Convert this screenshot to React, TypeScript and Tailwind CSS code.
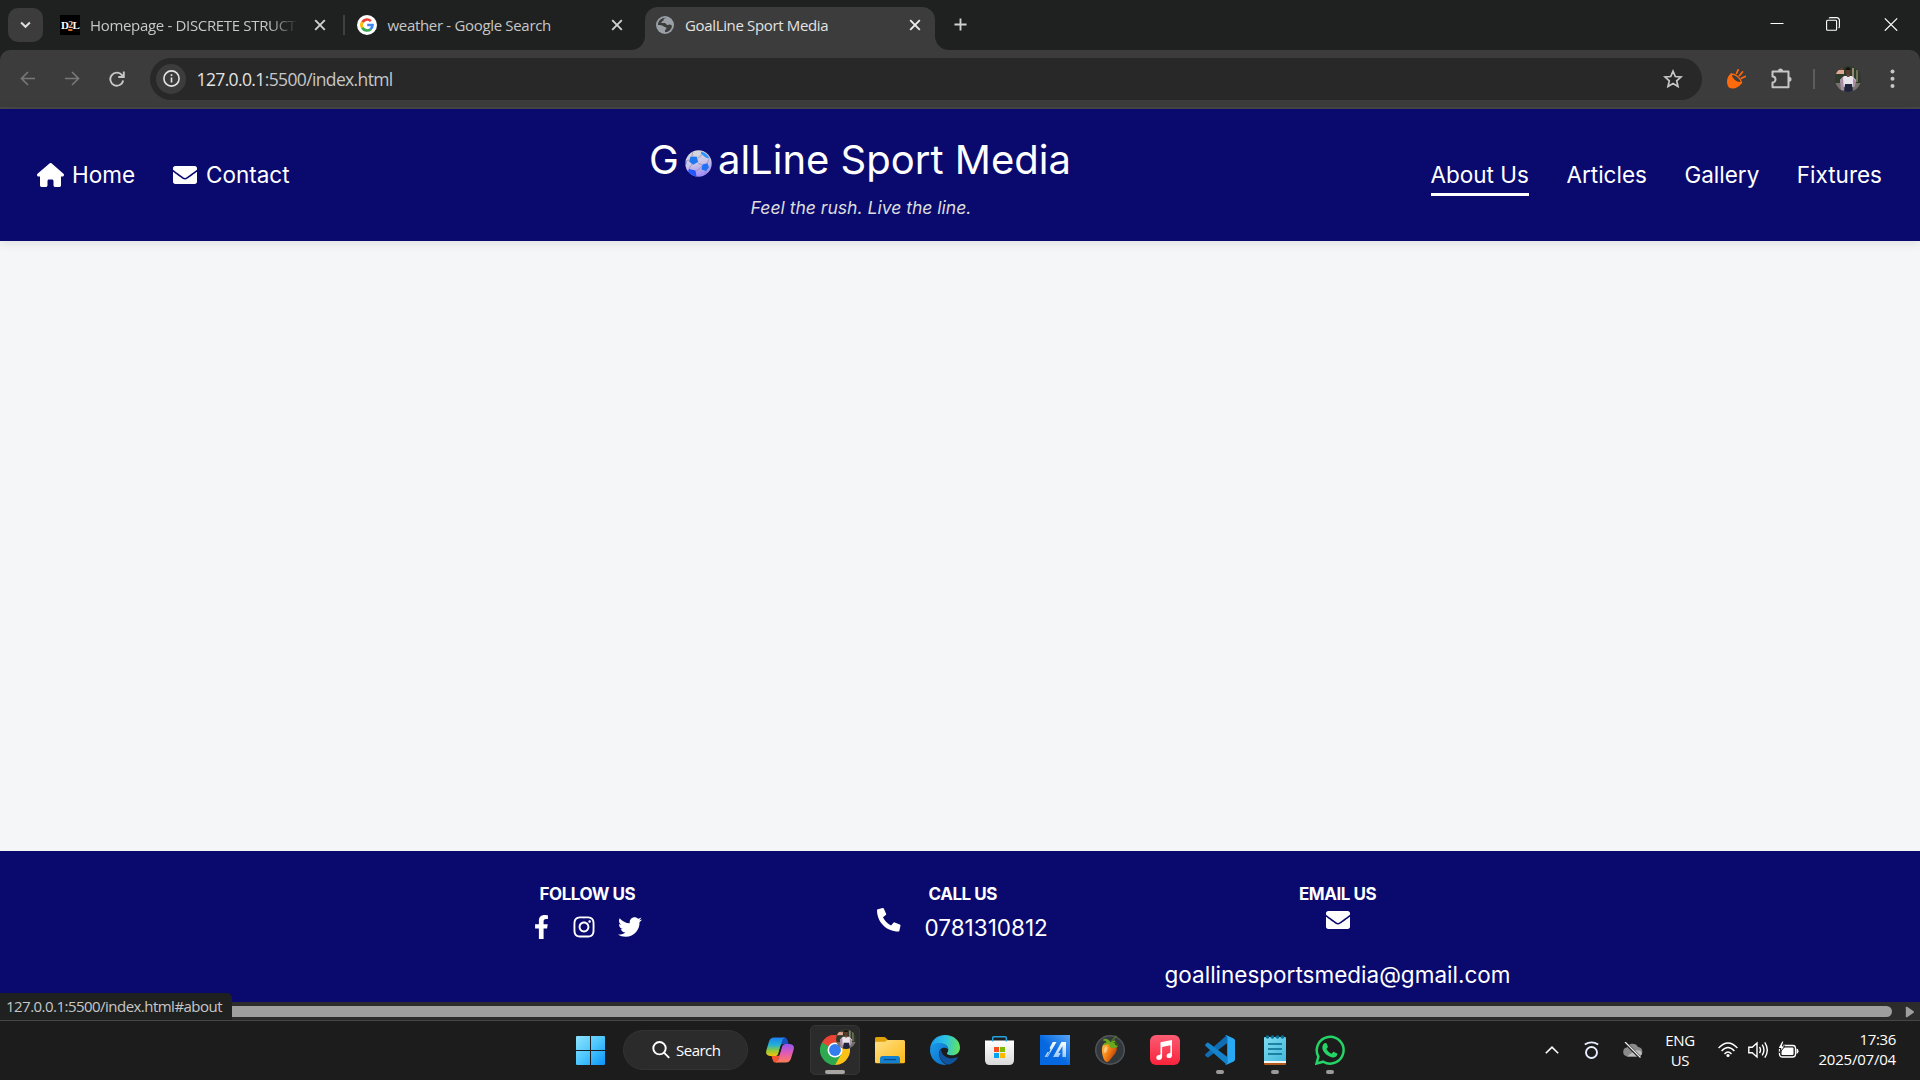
import type { ReactNode } from "react";
import { FaEnvelope, FaFacebookF, FaInstagram, FaTwitter, FaPhoneAlt } from "react-icons/fa";
import { FaHouse } from "react-icons/fa6";

function CloseIcon({ color = "#d0d0d0" }: { color?: string }) {
  return (
    <svg className="size-3 shrink-0" viewBox="0 0 12 12" stroke={color} strokeWidth="1.9" fill="none">
      <path d="M1.2 1.2l9.6 9.6M10.8 1.2l-9.6 9.6" />
    </svg>
  );
}

function GoogleIcon() {
  return (
    <svg className="size-5 shrink-0" viewBox="0 0 20 20" fill="none">
      <circle cx="10" cy="10" r="10" fill="#fff" />
      <g strokeWidth="2.7">
        <path d="M5.3 7.2A5.5 5.5 0 0 1 13.9 6.1" stroke="#ea4335" />
        <path d="M5.4 13A5.5 5.5 0 0 1 5.4 7" stroke="#fbbc05" />
        <path d="M13.6 14.2A5.5 5.5 0 0 1 5.3 12.8" stroke="#34a853" />
        <path d="M10.2 10h5.3a5.5 5.5 0 0 1-2 4.2" stroke="#4285f4" />
      </g>
    </svg>
  );
}

function GlobeIcon() {
  return (
    <svg className="size-[18px] shrink-0" viewBox="0 0 18 18">
      <circle cx="9" cy="9" r="9" fill="#9aa0a6" />
      <path
        d="M10.500 2C8.200 2 7.300 3 7.500 4.300c.1.900-.9.900-1.600 1.100-.8.300-.7 1.600.4 1.700h2.400c1.500 0 1.300 1.700 2.600 1.900 1.200.2 1.400-.6 2.500-.6s1.500 1 2.300 1.100A7.200 7.200 0 0 1 9 16.200v-2.300c1.400-.1 1.700-1.300 1.200-2.100-.6-.9-1.900-.6-2.700-1.500C6.300 9 4.300 8.900 1.900 8.900 2 4.800 5.600 1.700 9.500 1.800z"
        fill="#3c3c3c"
      />
    </svg>
  );
}

function Avatar({ className }: { className: string }) {
  return (
    <svg className={className} viewBox="0 0 26 26">
      <defs>
        <clipPath id="avatar-clip">
          <circle cx="13" cy="13" r="13" />
        </clipPath>
      </defs>
      <g clipPath="url(#avatar-clip)">
        <rect width="26" height="26" fill="#303a2c" />
        <rect width="8" height="7" fill="#574438" />
        <rect x="1" y="4" width="8" height="4" fill="#dca892" />
        <rect x="17" y="2" width="2" height="12" fill="#8f8a70" />
        <rect x="21" y="4" width="2" height="12" fill="#6f7257" />
        <rect y="17" width="26" height="9" fill="#77726e" />
        <path d="M5 14l4-4h8l4 4-2 7H7z" fill="#e9e4ec" />
        <path d="M5 14l3-3 1 13H6zM18 12l3 3-1 5-2 1z" fill="#aa8da5" />
        <path d="M12 7h2.500v4H12z" fill="#6e4635" />
        <ellipse cx="13" cy="5" rx="2.500" ry="3.200" fill="#5c3a2b" />
        <path d="M10.500 4a2.500 2.800 0 0 1 5 0z" fill="#15110f" />
        <path d="M10 18h7l1 8H9z" fill="#20233c" />
      </g>
    </svg>
  );
}

function Tabs() {
  return (
    <div className="flex h-[50px] shrink-0 bg-[#1f2120] font-['Open_Sans','Noto_Sans',sans-serif] text-[15px] leading-[20px] text-[#c7c7c7]">
      <div className="ml-2 mt-2 flex h-[34px] w-[35px] items-center justify-center rounded-[10px] bg-[#3c3c3c]">
        <svg className="h-[8px] w-[11px]" viewBox="0 0 12 8" fill="none" stroke="#dedede" strokeWidth="2.200">
          <path d="M1.200 1.200L6 6l4.800-4.800" />
        </svg>
      </div>
      <div className="ml-[17px] flex h-[50px] w-[284px] items-center">
        <div className="flex h-5 w-5 items-center justify-center bg-black font-['Liberation_Serif',serif] text-[11px] font-bold tracking-[-0.8px] text-white">
          D<span className="text-[10px] text-[#d9c3b5] underline decoration-[#e06a1f] decoration-2 underline-offset-1">2</span>L
        </div>
        <div className="ml-[10px] w-[208px] whitespace-nowrap tracking-[-0.33px] [mask-image:linear-gradient(to_right,#000_86%,transparent)]">
          Homepage - DISCRETE STRUCT
        </div>
        <div className="ml-4 flex">
          <CloseIcon />
        </div>
      </div>
      <div className="-ml-px mt-[15px] h-5 w-[2px] bg-[#3f4140]" />
      <div className="ml-[12px] flex h-[50px] w-[288px] items-center">
        <GoogleIcon />
        <div className="ml-[10.500px] w-[223.500px] whitespace-nowrap tracking-[-0.32px]">weather - Google Search</div>
        <CloseIcon />
      </div>
      <div className="relative mt-[7px] flex h-[43px] w-[290px] items-center rounded-t-[13px] bg-[#3c3c3c] pb-[7px] pl-[11px] text-[#e3e3e3]">
        <svg className="absolute -left-[14px] bottom-0 size-[14px]" viewBox="0 0 14 14">
          <path d="M14 0v14H0A14 14 0 0 0 14 0z" fill="#3c3c3c" />
        </svg>
        <svg className="absolute -right-[14px] bottom-0 size-[14px]" viewBox="0 0 14 14">
          <path d="M0 0v14h14A14 14 0 0 1 0 0z" fill="#3c3c3c" />
        </svg>
        <GlobeIcon />
        <div className="ml-[11px] w-[224px] whitespace-nowrap tracking-[-0.35px]">GoalLine Sport Media</div>
        <CloseIcon color="#eeeeee" />
      </div>
      <svg className="ml-[19px] mt-[18px] size-[13px]" viewBox="0 0 14 14" stroke="#d0d0d0" strokeWidth="2">
        <path d="M7 .5v13M.5 7h13" />
      </svg>
      <div className="ml-auto flex h-[50px] pr-[22px]">
        <svg className="mr-[42px] mt-[17px] size-[14px]" viewBox="0 0 14 14" stroke="#fff" strokeWidth="1">
          <path d="M.5 6.500h13" />
        </svg>
        <svg className="mr-[44px] mt-[17px] size-[14px]" viewBox="0 0 14 14" fill="none" stroke="#fff" strokeWidth="1.100">
          <rect x=".6" y="3.200" width="10" height="10" rx="1" />
          <path d="M3 1.300q.5-.7 1.500-.7h5.900q3 0 3 3v5.900q0 1-.8 1.500" />
        </svg>
        <svg className="mt-[17px] size-[14px]" viewBox="0 0 14 14" fill="none" stroke="#fff" strokeWidth="1.200">
          <path d="M.8 1.300l12.400 12.400M13.200 1.300L.8 13.700" />
        </svg>
      </div>
    </div>
  );
}

function Toolbar() {
  return (
    <div className="h-[59px] shrink-0 bg-[#1f2120]">
      <div className="flex h-[59px] items-center rounded-t-[10px] border-b-2 border-[#474747] bg-[#3c3c3c]">
        <svg className="ml-5 size-[15px] shrink-0" viewBox="0 0 15 15" fill="none" stroke="#777" strokeWidth="1.700">
          <path d="M15 7.500H1.500M8 1L1.500 7.500 8 14" />
        </svg>
        <svg className="ml-[30px] size-[15px] shrink-0" viewBox="0 0 15 15" fill="none" stroke="#777" strokeWidth="1.700">
          <path d="M0 7.500h13.500M7 1l6.500 6.500L7 14" />
        </svg>
        <svg className="ml-[29px] size-4 shrink-0" viewBox="0 0 16 16" fill="none" stroke="#c7c7c7" strokeWidth="1.900">
          <path d="M14.200 9.500A6.500 6.500 0 1 1 13 4.200L14.500 6M14.800 .5V6H9.300" />
        </svg>
        <div className="ml-[25px] flex h-[42px] w-[1552px] shrink-0 items-center rounded-full bg-[#282828] pl-[6px]">
          <div className="flex size-[30px] items-center justify-center rounded-full bg-[#3c3c3c]">
            <svg className="size-[17px]" viewBox="0 0 17 17" fill="none" stroke="#e3e3e3" strokeWidth="1.600">
              <circle cx="8.500" cy="8.500" r="7.600" />
              <path d="M8.500 7.500v5M8.500 4.200v1.900" />
            </svg>
          </div>
          <div className="ml-[10.500px] whitespace-nowrap font-['Open_Sans','Noto_Sans',sans-serif] text-[17.500px] leading-6 tracking-[-0.63px] text-[#c7c7c7]">
            <span className="text-[#e3e3e3]">127.0.0.1</span>:5500/index.html
          </div>
          <svg className="ml-auto mr-[19px] size-5" viewBox="0 0 20 20" fill="none" stroke="#c7c7c7" strokeWidth="1.700">
            <path d="M10 2.200l2.300 5.300 5.700.5-4.300 3.800 1.300 5.700L10 14.500l-5 3 1.300-5.700L2 8l5.700-.5z" />
          </svg>
        </div>
        <svg className="ml-[24px] size-5 shrink-0" viewBox="0 0 20 20">
          <path d="M4.800 4.800C0 8 .2 16 3 18.500c3.500 2.500 10 .5 13-4.700C12 14 6.500 11 4.800 4.800z" fill="#ff6a0c" />
          <path d="M5.200 5C4.800 9.500 10 14.500 15.500 13.600 14.500 9 9.500 5 5.200 5z" fill="#3c3c3c" stroke="#ff6a0c" strokeWidth="1.400" />
          <path d="M10.500 4.500l1.600-3.600M13.500 6.500l3-3.500M15.500 9.300l3.700-1.800" stroke="#ff6a0c" strokeWidth="1.700" strokeLinecap="round" />
        </svg>
        <svg className="ml-[24px] size-[23px] shrink-0" viewBox="0 0 23 23">
          <path
            d="M2.500 4.500h16v15.800h-16v-4.800a3 3 0 0 0 0-6z"
            fill="none"
            stroke="#c7c7c7"
            strokeWidth="2"
            strokeLinejoin="round"
          />
          <path d="M8 4a2.500 2.500 0 0 1 5 0zM19 9.800a2.500 2.500 0 0 1 0 5z" fill="#c7c7c7" />
        </svg>
        <div className="ml-5 h-5 w-[2px] bg-[#5c5c5c]" />
        <Avatar className="ml-5 size-[26px] shrink-0" />
        <svg className="ml-[29px] h-[20px] w-[5px] shrink-0" viewBox="0 0 5 20" fill="#c7c7c7">
          <circle cx="2.500" cy="2.500" r="2" />
          <circle cx="2.500" cy="9.700" r="2" />
          <circle cx="2.500" cy="17" r="2" />
        </svg>
      </div>
    </div>
  );
}

function Football() {
  return (
    <svg className="size-[27px]" viewBox="0 0 27 27">
      <defs>
        <linearGradient id="ball" x1=".3" y1="0" x2=".6" y2="1">
          <stop offset="0" stopColor="#d9dbd9" />
          <stop offset=".5" stopColor="#ccc4e8" />
          <stop offset="1" stopColor="#9b86f8" />
        </linearGradient>
        <clipPath id="ball-clip">
          <circle cx="13.500" cy="13.500" r="13.200" />
        </clipPath>
      </defs>
      <g clipPath="url(#ball-clip)">
        <rect width="27" height="27" fill="url(#ball)" />
        <g stroke="#8b8ba8" strokeWidth=".7" fill="none">
          <path d="M7 6l1-5M13 8l5-4M13 13l4 2M7 14l-3 5M1 11l3-1M17 16l-4 4M22 14l2-5M10 22l3-2M22 19l-2 5" />
        </g>
        <path d="M5.500 6.500l6.300.3 1.300 5.300-5 2.700-4-3.300z" fill="#1f78f0" />
        <path d="M17.500 14.500l4.800-1.300 1.700 4-3 3.800-4.500-1.500z" fill="#1f70f4" />
        <path d="M16 1.500q6 1.500 8.500 7l-3.500-.7-5-4z" fill="#2f93ff" />
        <path d="M4 19l6.500 1.500 1 6H8Q4 24 3 21z" fill="#2455ff" />
        <path d="M0 9l1.500 3L1 15H0z" fill="#2b55e0" />
      </g>
    </svg>
  );
}

function SiteHeader() {
  return (
    <header className="relative flex h-[132px] shrink-0 justify-between bg-[#0a0a6e] pl-[37px] pr-[38px] text-[22.500px] leading-[30px] text-white shadow-[0_2px_10px_rgba(0,0,0,0.1)]">
      <nav className="flex pt-[51px]">
        <a className="flex h-[30px] w-[136px] items-center">
          <FaHouse className="h-6 w-[27px]" />
          <span className="ml-[8px]">Home</span>
        </a>
        <a className="flex h-[30px] items-center">
          <FaEnvelope className="size-6" />
          <span className="ml-[9px]">Contact</span>
        </a>
      </nav>
      <div className="absolute left-[560px] top-0 flex w-[600px] flex-col items-center">
        <h1 className="mt-[27px] flex h-[48px] items-center whitespace-nowrap text-[40px] leading-[48px]">
          G
          <span className="mx-[6px] mt-[7px]">
            <Football />
          </span>
          alLine Sport Media
        </h1>
        <p className="ml-[2px] mt-[12px] text-[17.600px] italic leading-[24px] tracking-[-0.02px] text-[#dcdcdc]">
          Feel the rush. Live the line.
        </p>
      </div>
      <nav className="flex gap-[37.500px] pt-[51px]">
        <a className="h-[36px] border-b-[3px] border-white">About Us</a>
        <a>Articles</a>
        <a>Gallery</a>
        <a>Fixtures</a>
      </nav>
    </header>
  );
}

function SiteFooter() {
  return (
    <footer className="flex h-[151px] shrink-0 bg-[#0a0a6e] text-[22.500px] leading-[30px] text-white">
      <section className="ml-[534px] w-[343px] pt-[32px]">
        <h4 className="ml-[5.500px] text-[17px] font-bold leading-[22px] tracking-[-0.46px]">FOLLOW US</h4>
        <div className="mt-[8px] flex h-[28px] items-center">
          <FaFacebookF className="h-6 w-[15px]" />
          <FaInstagram className="ml-[23px] size-[24px]" />
          <FaTwitter className="ml-[22px] size-6" />
        </div>
      </section>
      <section className="flex w-[288px]">
        <FaPhoneAlt className="mt-[57px] size-[23.500px]" />
        <div className="ml-[24px] pt-[32px]">
          <h4 className="ml-[4px] text-[17px] font-bold leading-[22px] tracking-[-0.46px]">CALL US</h4>
          <div className="mt-[8px]">0781310812</div>
        </div>
      </section>
      <section className="flex w-[345px] flex-col items-center pt-[32px]">
        <h4 className="text-[17px] font-bold leading-[22px] tracking-[-0.46px]">EMAIL US</h4>
        <FaEnvelope className="mt-[3px] size-6" />
        <div className="mt-[28px]">goallinesportsmedia@gmail.com</div>
      </section>
    </footer>
  );
}

function ScrollArea() {
  return (
    <div className="relative flex h-[19px] shrink-0 items-start border-b border-[#464646] bg-[#2c2c2c] pt-[4px]">
      <div className="h-[11px] w-[1892px] rounded-r-full bg-[#9f9f9f]" />
      <svg className="ml-[13px] h-[12px] w-[10px]" viewBox="0 0 10 12">
        <path d="M.8 1.500v9q.2 1.200 1.300.7l6.500-4.500q.8-.7 0-1.400L2.100.8Q1 .3.800 1.500z" fill="#9f9f9f" />
      </svg>
      <div className="absolute bottom-0 left-0 h-[27px] w-[232px] rounded-tr-[5px] bg-[#1f2120] pl-[6px] font-['Open_Sans','Noto_Sans',sans-serif] text-[15px] leading-[26px] tracking-[-0.53px] text-[#c7c7c7]">
        127.0.0.1:5500/index.html#about
      </div>
    </div>
  );
}

function TaskSlot({ children, running = false }: { children: ReactNode; running?: boolean }) {
  return (
    <div className="relative flex h-[58px] w-[55px] shrink-0 items-center justify-center">
      {children}
      {running && <div className="absolute bottom-[5px] h-1 w-2 rounded-full bg-[#9a9a9a]" />}
    </div>
  );
}

function CopilotIcon() {
  return (
    <svg className="h-[26px] w-[28px]" viewBox="0 0 28 26">
      <defs>
        <linearGradient id="cp-left" x1="0" y1="0" x2="0" y2="1">
          <stop offset="0" stopColor="#1d7ff0" />
          <stop offset=".4" stopColor="#22b0d8" />
          <stop offset=".7" stopColor="#8ec93c" />
          <stop offset="1" stopColor="#f2c40c" />
        </linearGradient>
        <linearGradient id="cp-right" x1="0" y1="0" x2="0" y2="1">
          <stop offset="0" stopColor="#9256ee" />
          <stop offset=".5" stopColor="#e25bb4" />
          <stop offset="1" stopColor="#ff7d55" />
        </linearGradient>
      </defs>
      <path d="M17 .500h2q2 .4 2.700 3L22.500 7h-5.800q-2.400 0-3 2.500z" fill="#174fc0" />
      <path d="M11 25.500H9q-2-.5-2.500-3L5.500 19h6q2.300 0 3-2.500z" fill="#f2552f" />
      <path d="M8 .5h11q-2.200.8-3 3.700l-3.400 11.700Q11.700 19 9 19H4q-5-.5-3.600-5.800L3 4.500Q4.300.6 8 .5z" fill="url(#cp-left)" />
      <path d="M20 25.500H9.500q2.200-.8 3-3.700L16 10.100Q16.900 7 19.500 7H24q5 .6 3.600 5.800L25 21.500q-1.300 4-5 4z" fill="url(#cp-right)" />
      <path d="M12.200 17l2.200-7.500q.5-2 2-2.500l-2.300 8.200q-.5 1.500-1.900 1.800z" fill="#1c1c1c" />
    </svg>
  );
}

function ChromeIcon() {
  return (
    <svg className="size-[30px]" viewBox="0 0 48 48">
      <path d="M24 24L3.200 12A24 24 0 0 1 44.800 12z" fill="#ea4335" />
      <path d="M24 24L44.800 12A24 24 0 0 1 24 48z" fill="#fbc116" />
      <path d="M24 24L24 48A24 24 0 0 1 3.200 12z" fill="#2da94f" />
      <path d="M24 12h20.800L34.400 30 24 48l10.400-18z" fill="#fbc116" />
      <path d="M3.200 12l10.400 18L24 24V12z" fill="#2da94f" />
      <path d="M3.200 12A24 24 0 0 1 44.800 12H24a12 12 0 0 0-10.400 6z" fill="#ea4335" />
      <path d="M34.400 30L24 48a24 24 0 0 1-10-2l10-10z" fill="#2da94f" />
      <circle cx="24" cy="24" r="12" fill="#fff" />
      <circle cx="24" cy="24" r="9.500" fill="#347df0" />
    </svg>
  );
}

function FolderIcon() {
  return (
    <svg className="h-[27px] w-[30px]" viewBox="0 0 30 27">
      <defs>
        <linearGradient id="folder" x1="0" y1="0" x2="1" y2="1">
          <stop offset="0" stopColor="#ffe08a" />
          <stop offset="1" stopColor="#fdb913" />
        </linearGradient>
      </defs>
      <path d="M0 1.500Q0 0 1.500 0H9q1 0 1.700.7L13 3v5H0z" fill="#e0a008" />
      <path d="M0 6q0-1.200 1.200-1.200h8.600L12.500 3H28.500Q30 3 30 4.500v20.300q0 1.500-1.500 1.500h-27Q0 26.300 0 24.800z" fill="url(#folder)" />
      <path d="M5 26.300V21.500Q5 19 7.500 19h15q2.500 0 2.500 2.500v4.800z" fill="#1380d0" />
      <path d="M9 22.600h12" stroke="#08498c" strokeWidth="1.200" />
    </svg>
  );
}

function EdgeIcon() {
  return (
    <svg className="size-[30px]" viewBox="0 0 30 30">
      <defs>
        <linearGradient id="edge-top" x1="0" y1=".4" x2="1" y2=".5">
          <stop offset="0" stopColor="#1a9cf0" />
          <stop offset=".5" stopColor="#2cc3e4" />
          <stop offset="1" stopColor="#65e45b" />
        </linearGradient>
        <linearGradient id="edge-low" x1="0" y1="0" x2="1" y2="1">
          <stop offset="0" stopColor="#1b9be8" />
          <stop offset="1" stopColor="#0a6cc8" />
        </linearGradient>
      </defs>
      <path d="M0 14.500C.5 5 7.500 0 15 0c8.500 0 15 5.500 15 12.500 0 5-3.500 7.800-8 7.800-4 0-5.500-1.300-5-2.300.8-1 1.300-2 1.300-3.500C18.300 10 13 8 8.500 8.500 4 9 1 11.500 0 14.500z" fill="url(#edge-top)" />
      <path d="M0 15C.3 10.500 4.500 8 9.500 8c4.500 0 8.800 2.600 8.800 6.500-1-1.200-2.300-1.800-4-1.800-4 0-6 3.500-5 8 .8 4.500 4.200 8.300 8.300 9.100C7.500 31 0 24 0 15z" fill="url(#edge-low)" />
      <path d="M11 14c-2.500 3-2.300 8 .7 11.500 2.500 3 6.300 4.700 8.300 3.700 3-.9 6-3.300 7.600-6.200.3-.7-.2-1-.8-.7-1.500.8-3.300 1.100-5 1.100C16 23.400 11 19.500 11 14z" fill="#10549f" />
    </svg>
  );
}

function StoreIcon() {
  return (
    <svg className="h-[30px] w-[30px]" viewBox="0 0 30 30">
      <defs>
        <linearGradient id="store" x1="0" y1="0" x2="0" y2="1">
          <stop offset="0" stopColor="#fff" />
          <stop offset="1" stopColor="#d9d9d9" />
        </linearGradient>
      </defs>
      <path d="M0 5.500h29V25q0 5-5 5H5q-5 0-5-5z" fill="url(#store)" />
      <path d="M7.700 6.500V2.800Q7.700 1.700 8.800 1.700h11.400q1.100 0 1.100 1.100v3.700" fill="none" stroke="#22a4dc" strokeWidth="1.500" />
      <rect x="9" y="12" width="5" height="5" fill="#f25022" />
      <rect x="15" y="12" width="5" height="5" fill="#7fba00" />
      <rect x="9" y="18" width="5" height="5" fill="#00a4ef" />
      <rect x="15" y="18" width="5" height="5" fill="#ffb900" />
    </svg>
  );
}

function ArmouryIcon() {
  return (
    <svg className="size-[30px]" viewBox="0 0 30 30">
      <defs>
        <linearGradient id="arm" x1="0" y1="1" x2="1" y2="0">
          <stop offset=".45" stopColor="#0568e0" />
          <stop offset="1" stopColor="#58a4f6" />
        </linearGradient>
        <linearGradient id="arm-fg" x1="0" y1="0" x2="0" y2="1">
          <stop offset="0" stopColor="#fff" />
          <stop offset="1" stopColor="#9cc8fb" />
        </linearGradient>
      </defs>
      <rect width="30" height="30" fill="url(#arm)" />
      <path d="M4.500 22l3-5h2.300l-3 5zM7.800 22L16.500 7h-3.700L9.500 13l1 1.500L6.500 22zM13 22L21.500 7H26v15h-3.500V11l-4.200 7h2.400L18.500 22z" fill="url(#arm-fg)" />
    </svg>
  );
}

function FruityIcon() {
  return (
    <svg className="size-[30px]" viewBox="0 0 30 30">
      <defs>
        <linearGradient id="fruit" x1="0" y1="0" x2="1" y2=".6">
          <stop offset="0" stopColor="#ffc04a" />
          <stop offset=".5" stopColor="#f98516" />
          <stop offset="1" stopColor="#b63e05" />
        </linearGradient>
      </defs>
      <circle cx="15" cy="15" r="14.300" fill="#33383c" stroke="#50565a" strokeWidth="1.400" />
      <path d="M8 10c3-3.500 11-3 13.500 2 1.500 4-2.500 8-5.500 11.500-2.500 4.500-5.500 4.500-7 1C7 20 6 13.500 8 10z" fill="url(#fruit)" />
      <path d="M9.500 13c1-2 3-2 3 0s-2 6-3 5-1-3 0-5z" fill="#ffd898" opacity=".8" />
      <path d="M15.500 7c-3-4-6.500-4-8-1.500 2.500-.3 3.500.7 4 2-2 0-3 1-3 3 2-1.500 4-1 5.500-1 .3 2.500 2 4.500 4 3 1.500 1.300 4 .5 5-1.800-1.500.2-2-.7-3-1.200C22 6 19 4.500 17.500 6z" fill="#6ba81c" />
      <path d="M16.500 6.500L21.500.8" stroke="#4e7a20" strokeWidth="1.300" />
      <path d="M18 7q4-.5 6 3l-3-.5z" fill="#2e5c10" />
    </svg>
  );
}

function MusicIcon() {
  return (
    <svg className="size-[30px]" viewBox="0 0 30 30">
      <defs>
        <linearGradient id="music" x1="0" y1="0" x2="0" y2="1">
          <stop offset="0" stopColor="#fb5c74" />
          <stop offset="1" stopColor="#fa233b" />
        </linearGradient>
      </defs>
      <rect width="30" height="30" rx="6" fill="url(#music)" />
      <path d="M10.500 7.300L22 5v15.500q-.2 2.500-3 2.600-2.500 0-2.500-2.200 0-2.300 2.500-2.700 1.400-.1 1.400-1V10.300l-8.300 1.700v10q-.2 3-3.300 3.100-2.600-.1-2.600-2.400.1-2.200 2.600-2.600 1.700-.1 1.700-1.200z" fill="#fff" />
    </svg>
  );
}

function CodeIcon() {
  return (
    <svg className="size-[30px]" viewBox="0 0 30 30">
      <path d="M22 0v8.200L3.500 22.200q-.8.600-1.600-.1L.5 20.800q-.9-.9 0-1.800z" fill="#0f6db5" />
      <path d="M22 30v-8.200L3.500 7.800q-.8-.6-1.600.1L.5 9.200q-.9.9 0 1.800z" fill="#1583cc" />
      <path d="M21.500 0.200L28.700 3.500Q30 4.200 30 5.700v18.600q0 1.500-1.300 2.200l-7.200 3.300q-.8.400-1.500-.3 2.200.5 2.200-1.800V2.300q0-2.300-2.200-1.800.7-.7 1.500-.3z" fill="#29a8f4" />
    </svg>
  );
}

function NotepadIcon() {
  return (
    <svg className="h-[30px] w-[22px]" viewBox="0 0 22 30">
      <defs>
        <linearGradient id="note" x1="0" y1="0" x2="1" y2="1">
          <stop offset="0" stopColor="#7fdcf0" />
          <stop offset="1" stopColor="#42b8dc" />
        </linearGradient>
      </defs>
      <rect y="24" width="22" height="6" rx="1" fill="#b05a1c" />
      <rect y="22" width="22" height="6" fill="#f4f4f4" />
      <path d="M0 3q0-1 1-1h20q1 0 1 1v23H0z" fill="url(#note)" />
      <path d="M4 9h14M4 14h14M4 19h14" stroke="#076a8c" strokeWidth="1.600" />
      <g fill="#087094">
        <circle cx="3.500" cy="2" r="1.800" />
        <circle cx="8.500" cy="2" r="1.800" />
        <circle cx="13.500" cy="2" r="1.800" />
        <circle cx="18.500" cy="2" r="1.800" />
      </g>
    </svg>
  );
}

function WhatsAppIcon() {
  return (
    <svg className="size-[30px]" viewBox="0 0 30 30">
      <path d="M1.500 28.500l1.900-6.900A13.400 13.400 0 1 1 8.300 26.700z" fill="none" stroke="#25d366" strokeWidth="2.500" />
      <path d="M10.500 8c.7 0 1 .2 1.200.8l1.100 2.600c.2.600-.1 1-1.400 2.500 1.200 2.200 2.900 3.700 5.300 4.800 1.300-1.600 1.600-2 2.200-1.800l2.900 1.400c.5.300.6.600.4 1.400-.5 2-2.500 2.900-4.500 2.700-5-.7-9.700-5.200-10.300-9C7 10.500 8.800 8 10.500 8z" fill="#25d366" />
    </svg>
  );
}

function Tray() {
  return (
    <div className="ml-auto flex h-[58px] items-center pr-[24px] font-['Open_Sans','Noto_Sans',sans-serif] text-[15px] leading-[20px] tracking-[-0.35px] text-white">
      <svg className="h-2 w-[14px]" viewBox="0 0 14 8" fill="none" stroke="#fff" strokeWidth="1.600">
        <path d="M.8 7.200L7 1.200l6.200 6" />
      </svg>
      <svg className="ml-[25px] h-[18px] w-[15px]" viewBox="0 0 15 18" fill="none" stroke="#e8eefb" strokeWidth="1.900">
        <circle cx="7.500" cy="11.500" r="5.500" />
        <path d="M.8 3.500Q7.500-.8 14.200 3.500" />
      </svg>
      <svg className="ml-[23px] h-[16px] w-[21px]" viewBox="0 0 21 16">
        <path d="M5 14.500a4.600 4.600 0 0 1-.3-9A6.300 6.300 0 0 1 16 5a4.800 4.800 0 0 1 .4 9.500z" fill="#8a8a8a" />
        <path d="M5 14.500L13 8.500q6-1.500 7 3-1 3-3.600 3z" fill="#bdbdbd" />
        <path d="M2.500 0L18 15.500" stroke="#1c1c1c" strokeWidth="3" />
        <path d="M3 0l15.500 15.500" stroke="#eee" strokeWidth="1.300" />
      </svg>
      <div className="ml-[20px] w-[34px] text-center">
        <div>ENG</div>
        <div>US</div>
      </div>
      <svg className="ml-[21px] h-[16px] w-[20px]" viewBox="0 0 20 16" fill="none" stroke="#fff" strokeWidth="1.400">
        <path d="M.6 6Q10-4 19.400 6M3.600 9Q10 2 16.400 9M6.500 12Q10 8 13.500 12" />
        <circle cx="10" cy="13.500" r="1.600" fill="#fff" stroke="none" />
      </svg>
      <svg className="ml-[10px] h-[18px] w-[21px]" viewBox="0 0 21 18" fill="none" stroke="#fff" strokeWidth="1.400">
        <path d="M.8 6.200h3.400L9 2v14l-4.800-4.200H.8zM11.500 6q2 3 0 6M14.200 3.700q3.500 5.300 0 10.600M16.800 1.300q5 7.700 0 15.400" />
      </svg>
      <svg className="ml-[9px] h-[18px] w-[21px]" viewBox="0 0 21 18">
        <rect x="1.500" y="4.500" width="16" height="11.500" rx="2.800" fill="none" stroke="#fff" strokeWidth="1.300" />
        <rect x="3.500" y="6.500" width="12" height="7.500" rx="1" fill="#fff" />
        <path d="M18.500 7.500q2 .3 2 2.700t-2 2.700z" fill="#fff" />
        <path d="M4 0L0 7.500h3L1.500 12 7 5H4.300L6 0z" fill="#fff" stroke="#1c1c1c" strokeWidth="1" />
      </svg>
      <div className="mb-[3px] ml-[15px] w-[82px] text-right">
        <div>17:36</div>
        <div className="tracking-[-0.2px]">2025/07/04</div>
      </div>
    </div>
  );
}

function Taskbar() {
  return (
    <div className="flex h-[59px] shrink-0 items-start bg-[#1c1c1c]">
      <svg className="ml-[576px] mt-[15px] size-[29px] shrink-0" viewBox="0 0 29 29">
        <defs>
          <linearGradient id="win" x1="0" y1="0" x2="29" y2="29" gradientUnits="userSpaceOnUse">
            <stop offset="0" stopColor="#8fe3ff" />
            <stop offset=".5" stopColor="#4cc6fd" />
            <stop offset="1" stopColor="#0a93f8" />
          </linearGradient>
        </defs>
        <path d="M1 0h13v14H0V1q0-1 1-1zM15 0h13q1 0 1 1v13H15zM0 15h14v14H1q-1 0-1-1zM15 15h14v13q0 1-1 1H15z" fill="url(#win)" />
      </svg>
      <div className="ml-[18px] mt-[9px] flex h-10 w-[125px] shrink-0 items-center rounded-full border border-[#333] bg-[#2b2b2b] pl-[28px] font-['Open_Sans','Noto_Sans',sans-serif] text-[15px] tracking-[-0.5px] text-white">
        <svg className="size-[18px]" viewBox="0 0 18 18" fill="none" stroke="#fff" strokeWidth="1.900">
          <circle cx="7.500" cy="7.200" r="6.200" />
          <path d="M12 11.700l5.200 5.200" />
        </svg>
        <span className="ml-[6px]">Search</span>
      </div>
      <div className="ml-[4.500px] flex">
        <TaskSlot>
          <CopilotIcon />
        </TaskSlot>
        <TaskSlot>
          <div className="relative flex size-[50px] items-center justify-center rounded-[5px] border border-[#353535] bg-[#2b2b2b]">
            <ChromeIcon />
            <Avatar className="absolute right-[3px] top-[3px] size-5" />
            <div className="absolute bottom-0 h-1 w-5 rounded-full bg-[#a8a5a2]" />
          </div>
        </TaskSlot>
        <TaskSlot>
          <FolderIcon />
        </TaskSlot>
        <TaskSlot>
          <EdgeIcon />
        </TaskSlot>
        <TaskSlot>
          <StoreIcon />
        </TaskSlot>
        <TaskSlot>
          <ArmouryIcon />
        </TaskSlot>
        <TaskSlot>
          <FruityIcon />
        </TaskSlot>
        <TaskSlot>
          <MusicIcon />
        </TaskSlot>
        <TaskSlot running>
          <CodeIcon />
        </TaskSlot>
        <TaskSlot running>
          <NotepadIcon />
        </TaskSlot>
        <TaskSlot running>
          <WhatsAppIcon />
        </TaskSlot>
      </div>
      <Tray />
    </div>
  );
}

export default function App() {
  return (
    <div className="flex h-[1080px] w-[1920px] flex-col overflow-hidden bg-[#f4f6f8] font-['Inter',sans-serif]">
      <Tabs />
      <Toolbar />
      <SiteHeader />
      <main className="h-[610px] shrink-0" />
      <SiteFooter />
      <ScrollArea />
      <Taskbar />
    </div>
  );
}
